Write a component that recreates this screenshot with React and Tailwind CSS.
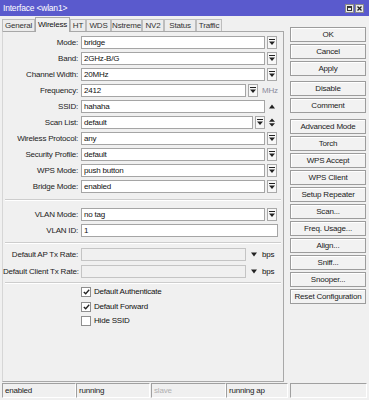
import React from 'react';

const tabs = [
  { name: 'General', w: 'w-[33px]' },
  { name: 'Wireless', w: 'w-[35px]', active: true },
  { name: 'HT', w: 'w-[16px]' },
  { name: 'WDS', w: 'w-[25px]' },
  { name: 'Nstreme', w: 'w-[31px]' },
  { name: 'NV2', w: 'w-[22px]' },
  { name: 'Status', w: 'w-[32px]' },
  { name: 'Traffic', w: 'w-[26px]' },
];

function DropBtn() {
  return (
    <div className="ml-[2px] w-[10px] h-[13px] border border-[#a9a9a9] bg-[#f7f7f7] flex items-center justify-center">
      <svg width="6" height="7" viewBox="0 0 6 7">
        <rect x="0" y="0" width="6" height="1" fill="#222" />
        <path d="M0 2.5 L6 2.5 L3 6 Z" fill="#222" />
      </svg>
    </div>
  );
}

function Field({ value, w = 'w-[184px]', disabled }) {
  return (
    <div className={`${w} h-[13px] border flex items-center px-[2px] leading-none ${disabled ? 'border-[#c4c4c4] bg-[#f0f0f0]' : 'border-[#a5a5a5] bg-white'}`}>
      {value}
    </div>
  );
}

function Row({ label, mt = 'mt-[3px]', children }) {
  return (
    <div className={`flex items-center h-[13px] ${mt}`}>
      <div className="w-[75px] text-right leading-none whitespace-nowrap text-[#222]">{label}</div>
      <div className="ml-[3px] flex items-center">{children}</div>
    </div>
  );
}

function Sep({ mt }) {
  return <div className={`${mt} mx-[2px] border-t border-[#cdcdcd] border-b border-b-white`} />;
}

function Check({ label, checked, mt }) {
  return (
    <div className={`flex items-center h-[13px] ${mt} pl-[78px]`}>
      <div className="w-[10px] h-[10px] border border-[#8e8e8e] bg-white flex items-center justify-center">
        {checked && (
          <svg width="7" height="6" viewBox="0 0 7 6">
            <path d="M0.8 3 L2.7 4.8 L6.2 0.8" stroke="#222" strokeWidth="1.3" fill="none" />
          </svg>
        )}
      </div>
      <span className="ml-[3px] leading-none">{label}</span>
    </div>
  );
}

function Btn({ children, mt = 'mt-[2px]' }) {
  return (
    <div className={`${mt} w-[76px] h-[15px] border border-[#9c9c9c] bg-[#f2f2f2] shadow-[inset_1px_1px_0_#ffffff] flex items-center justify-center leading-none whitespace-nowrap text-[#222]`}>
      {children}
    </div>
  );
}

function Cell({ w, ml, children, dim }) {
  return (
    <div className={`${w} ${ml} h-[15px] border border-t-[#a0a0a0] border-l-[#a0a0a0] border-r-white border-b-white flex items-center px-[2px] leading-none ${dim ? 'text-[#b0b0b0]' : 'text-[#222]'}`}>
      {children}
    </div>
  );
}

export default function App() {
  return (
    <div className="w-[369px] h-[400px] bg-[#f0f0f0] flex flex-col overflow-hidden text-[8px] tracking-[-0.2px] text-[#111] font-['Liberation_Sans',Arial,sans-serif]">
      {/* title bar */}
      <div className="h-[16px] bg-[#5a5acd] flex items-center justify-between pl-[3px] pr-[5px] text-white">
        <span className="leading-none text-[8.5px]">Interface &lt;wlan1&gt;</span>
        <div className="flex gap-[1px]">
          <div className="w-[9px] h-[9px] bg-[#e8e8e8] border border-[#8a8a8a] flex items-center justify-center">
            <div className="w-[5px] h-[5px] border border-[#333] border-t-2" />
          </div>
          <div className="w-[9px] h-[9px] bg-[#e8e8e8] border border-[#8a8a8a] flex items-center justify-center">
            <svg width="5" height="5" viewBox="0 0 5 5">
              <path d="M0.5 0.5 L4.5 4.5 M4.5 0.5 L0.5 4.5" stroke="#222" strokeWidth="1.3" />
            </svg>
          </div>
        </div>
      </div>

      <div className="flex h-[366px]">
        {/* left tab panel */}
        <div className="w-[284px] flex flex-col">
          <div className="h-[15px] pl-[2px] flex items-end">
            {tabs.map((t) =>
              t.active ? (
                <div key={t.name} className={`${t.w} h-[15px] -mb-px z-10 bg-[#f0f0f0] border-t border-l border-r border-[#a8a8a8] flex items-center justify-center leading-none whitespace-nowrap`}>
                  {t.name}
                </div>
              ) : (
                <div key={t.name} className={`${t.w} h-[12px] border-t border-l border-r border-[#bdbdbd] bg-[#ececec] flex items-center justify-center leading-none whitespace-nowrap text-[#333]`}>
                  {t.name}
                </div>
              )
            )}
          </div>
          <div className="flex-1 ml-[2px] border border-[#a8a8a8] border-l-[#d6d6d6] flex flex-col">
            <Row label="Mode:" mt="mt-[4px]"><Field value="bridge" /><DropBtn /></Row>
            <Row label="Band:"><Field value="2GHz-B/G" /><DropBtn /></Row>
            <Row label="Channel Width:"><Field value="20MHz" /><DropBtn /></Row>
            <Row label="Frequency:">
              <Field value="2412" w="w-[165px]" /><DropBtn />
              <span className="ml-[4px] text-[#8a8a9c] leading-none">MHz</span>
            </Row>
            <Row label="SSID:">
              <Field value="hahaha" />
              <svg className="ml-[4px]" width="6" height="5" viewBox="0 0 6 5"><path d="M0 4.5 L6 4.5 L3 0.5 Z" fill="#222" /></svg>
            </Row>
            <Row label="Scan List:">
              <Field value="default" w="w-[172px]" /><DropBtn />
              <svg className="ml-[4px]" width="6" height="9" viewBox="0 0 6 9"><path d="M0 3.8 L6 3.8 L3 0.5 Z M0 5.2 L6 5.2 L3 8.5 Z" fill="#222" /></svg>
            </Row>
            <Row label="Wireless Protocol:"><Field value="any" /><DropBtn /></Row>
            <Row label="Security Profile:"><Field value="default" /><DropBtn /></Row>
            <Row label="WPS Mode:"><Field value="push button" /><DropBtn /></Row>
            <Row label="Bridge Mode:"><Field value="enabled" /><DropBtn /></Row>

            <Sep mt="mt-[6px]" />
            <Row label="VLAN Mode:" mt="mt-[7px]"><Field value="no tag" /><DropBtn /></Row>
            <Row label="VLAN ID:"><Field value="1" w="w-[197px]" /></Row>

            <Sep mt="mt-[5px]" />
            <Row label="Default AP Tx Rate:" mt="mt-[4px]">
              <Field value="" w="w-[165px]" disabled />
              <svg className="ml-[5px]" width="6" height="5" viewBox="0 0 6 5"><path d="M0 0.5 L6 0.5 L3 4.5 Z" fill="#222" /></svg>
              <span className="ml-[5px] leading-none">bps</span>
            </Row>
            <Row label="Default Client Tx Rate:" mt="mt-[4px]">
              <Field value="" w="w-[165px]" disabled />
              <svg className="ml-[5px]" width="6" height="5" viewBox="0 0 6 5"><path d="M0 0.5 L6 0.5 L3 4.5 Z" fill="#222" /></svg>
              <span className="ml-[5px] leading-none">bps</span>
            </Row>

            <Sep mt="mt-[4px]" />
            <Check label="Default Authenticate" checked mt="mt-[1px]" />
            <Check label="Default Forward" checked mt="mt-[2px]" />
            <Check label="Hide SSID" mt="mt-[1px]" />
          </div>
        </div>

        {/* right buttons */}
        <div className="pl-[6px] pt-[11px] flex flex-col">
          <Btn mt="mt-0">OK</Btn>
          <Btn>Cancel</Btn>
          <Btn>Apply</Btn>
          <Btn mt="mt-[5px]">Disable</Btn>
          <Btn>Comment</Btn>
          <Btn mt="mt-[6px]">Advanced Mode</Btn>
          <Btn>Torch</Btn>
          <Btn>WPS Accept</Btn>
          <Btn>WPS Client</Btn>
          <Btn>Setup Repeater</Btn>
          <Btn>Scan...</Btn>
          <Btn>Freq. Usage...</Btn>
          <Btn>Align...</Btn>
          <Btn>Sniff...</Btn>
          <Btn>Snooper...</Btn>
          <Btn>Reset Configuration</Btn>
        </div>
      </div>

      {/* status bar */}
      <div className="flex pt-[1px] pl-[2px]">
        <Cell w="w-[74px]">enabled</Cell>
        <Cell w="w-[74px]">running</Cell>
        <Cell w="w-[75px]" ml="ml-[1px]" dim>slave</Cell>
        <Cell w="w-[62px]">running ap</Cell>
        <Cell w="w-[77px]" ml="ml-[2px]"></Cell>
      </div>
    </div>
  );
}
